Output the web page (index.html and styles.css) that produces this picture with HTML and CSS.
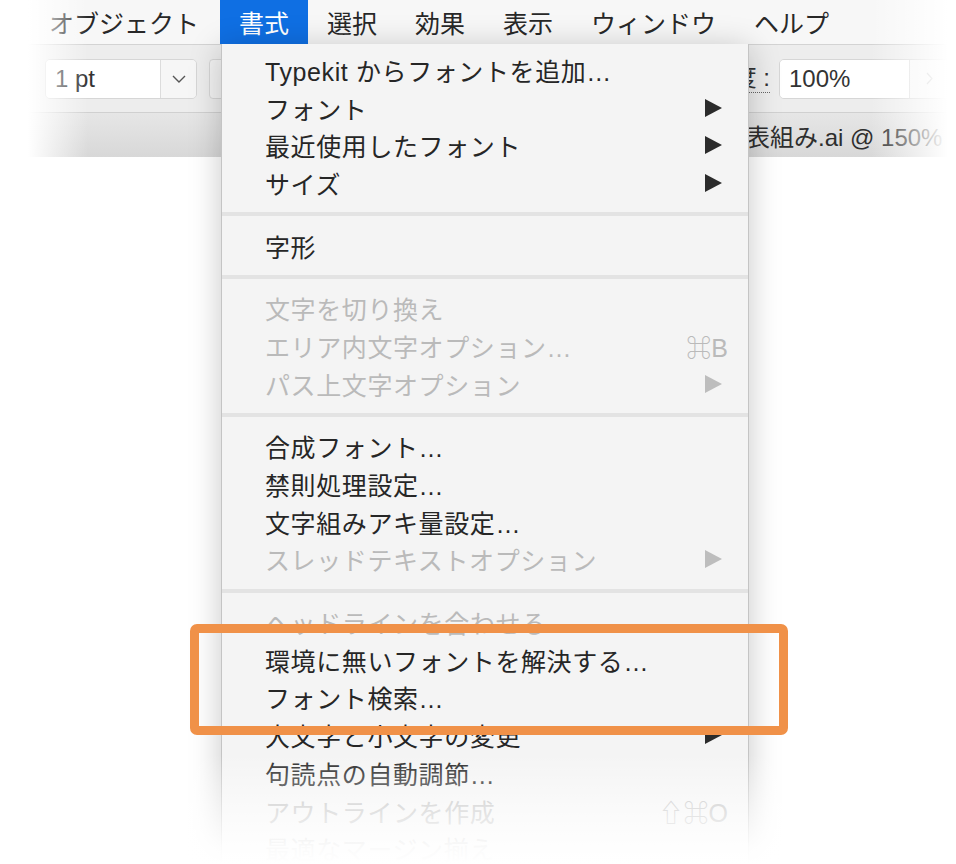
FILE: index.html
```html
<!DOCTYPE html>
<html lang="ja">
<head>
    <meta charset="UTF-8">
    <meta name="viewport" content="width=device-width, initial-scale=1.0">
    <title>書式メニュー</title>
    <link rel="stylesheet" href="styles.css">
</head>
<body>
    <div class="screen">
        <div class="menubar">
            <span class="menu-title">オブジェクト</span>
            <span class="menu-title active">書式</span>
            <span class="menu-title">選択</span>
            <span class="menu-title">効果</span>
            <span class="menu-title">表示</span>
            <span class="menu-title">ウィンドウ</span>
            <span class="menu-title">ヘルプ</span>
        </div>

        <div class="toolbar">
            <div class="combo">
                <span class="combo-value">1 pt</span>
                <span class="combo-drop">
                    <svg width="14" height="8" viewBox="0 0 14 8" fill="none" stroke="#555" stroke-width="1.4">
                        <polyline points="1 1 7 7 13 1"></polyline>
                    </svg>
                </span>
            </div>
            <div class="swatch-box"><span class="swatch-dot"></span></div>

            <div class="right-tools">
                <span class="opacity-label">不透明度 :</span>
                <div class="combo combo-wide">
                    <span class="combo-value">100%</span>
                    <span class="combo-next">
                        <svg width="7" height="13" viewBox="0 0 7 13" fill="none" stroke="#bbb" stroke-width="1.2">
                            <polyline points="1 1 6 6.5 1 12"></polyline>
                        </svg>
                    </span>
                </div>
            </div>
        </div>

        <div class="tabbar">
            <span class="doc-title">表組み.ai @ 150%</span>
        </div>

        <div class="fade-left"></div>
        <div class="fade-right"></div>

        <div class="dropdown">
            <div class="item"><span>Typekit からフォントを追加…</span></div>
            <div class="item"><span>フォント</span><span class="arrow"></span></div>
            <div class="item"><span>最近使用したフォント</span><span class="arrow"></span></div>
            <div class="item"><span>サイズ</span><span class="arrow"></span></div>
            <div class="separator"></div>
            <div class="item"><span>字形</span></div>
            <div class="separator"></div>
            <div class="item disabled"><span>文字を切り換え</span></div>
            <div class="item disabled"><span>エリア内文字オプション…</span><span class="shortcut">⌘B</span></div>
            <div class="item disabled"><span>パス上文字オプション</span><span class="arrow"></span></div>
            <div class="separator"></div>
            <div class="item"><span>合成フォント…</span></div>
            <div class="item"><span>禁則処理設定…</span></div>
            <div class="item"><span>文字組みアキ量設定…</span></div>
            <div class="item disabled"><span>スレッドテキストオプション</span><span class="arrow"></span></div>
            <div class="separator"></div>
            <div class="item disabled"><span>ヘッドラインを合わせる</span></div>
            <div class="item"><span>環境に無いフォントを解決する…</span></div>
            <div class="item"><span>フォント検索…</span></div>
            <div class="item"><span>大文字と小文字の変更</span><span class="arrow"></span></div>
            <div class="item"><span>句読点の自動調節…</span></div>
            <div class="item disabled"><span>アウトラインを作成</span><span class="shortcut">⇧⌘O</span></div>
            <div class="item disabled"><span>最適なマージン揃え</span></div>
        </div>

        <div class="highlight-box"></div>
        <div class="fade-bottom"></div>
    </div>
</body>
</html>
```

FILE: styles.css
```css
* {
    margin: 0;
    padding: 0;
    box-sizing: border-box;
    font-family: 'Liberation Sans', 'Noto Sans CJK JP', sans-serif;
}

body {
    background: #ffffff;
    color: #262626;
    overflow: hidden;
    width: 956px;
    height: 864px;
}

.screen {
    position: relative;
    width: 956px;
    height: 864px;
    overflow: hidden;
    background: #ffffff;
}

/* top menu bar */
.menubar {
    display: flex;
    height: 45px;
    padding-left: 30px;
    background: #f7f7f7;
    border-bottom: 1px solid #d3d3d3;
}

.menu-title {
    display: flex;
    align-items: center;
    height: 44px;
    padding: 0 19px;
    font-size: 25px;
    color: #282828;
}

.menu-title.active {
    margin-left: 2px;
    background: #0f6fe3;
    color: #ffffff;
}

/* tool options bar */
.toolbar {
    display: flex;
    align-items: center;
    height: 68px;
    padding: 0 6px 0 45px;
    background: #ededed;
    border-bottom: 1px solid #d0d0d0;
}

.combo {
    display: flex;
    height: 40px;
    border: 1px solid #d6d6d6;
    border-radius: 5px;
    overflow: hidden;
}

.combo-value {
    display: flex;
    align-items: center;
    width: 114px;
    padding-left: 9px;
    background: #ffffff;
    font-size: 24px;
    color: #333333;
}

.combo-drop {
    display: flex;
    align-items: center;
    justify-content: center;
    width: 36px;
    background: #f6f6f6;
    border-left: 1px solid #dcdcdc;
}

.swatch-box {
    display: flex;
    align-items: center;
    width: 60px;
    height: 40px;
    margin-left: 12px;
    padding-left: 11px;
    background: #f3f3f3;
    border: 1px solid #d6d6d6;
    border-radius: 4px;
}

.swatch-dot {
    width: 5px;
    height: 5px;
    background: #000000;
}

.right-tools {
    display: flex;
    align-items: center;
    gap: 9px;
    margin-left: auto;
}

.opacity-label {
    font-size: 24px;
    color: #333333;
    border-bottom: 1px dotted #666;
    line-height: 28px;
}

.combo-wide .combo-value {
    width: 129px;
}

.combo-next {
    display: flex;
    align-items: center;
    justify-content: center;
    width: 40px;
    background: #f6f6f6;
    border-left: 1px solid #dcdcdc;
}

/* document tab */
.tabbar {
    display: flex;
    align-items: center;
    height: 44px;
    padding-left: 746px;
    background: linear-gradient(#e6e6e6, #d8d8d8);
    white-space: nowrap;
}

.doc-title {
    font-size: 24px;
    color: #2e2e2e;
}

.fade-left {
    position: absolute;
    top: 0;
    left: 0;
    width: 100px;
    height: 160px;
    background: linear-gradient(to right, #fff 0, #fff 28px, rgba(255, 255, 255, 0) 88px);
}

.fade-right {
    position: absolute;
    top: 0;
    right: 0;
    width: 90px;
    height: 160px;
    background: linear-gradient(to left, #fff 0, #fff 8px, rgba(255, 255, 255, 0) 85px);
}

/* format dropdown */
.dropdown {
    position: absolute;
    top: 44px;
    left: 221px;
    width: 528px;
    height: 860px;
    padding: 7px 0 0;
    background: #f4f4f4;
    border-left: 1px solid #c4c4c4;
    border-right: 1px solid #c4c4c4;
    box-shadow: 0 4px 30px rgba(0, 0, 0, 0.22);
}

.item {
    display: flex;
    align-items: center;
    justify-content: space-between;
    height: 37.7px;
    padding: 0 20px 0 43px;
    font-size: 25px;
    letter-spacing: 0.6px;
    color: #262626;
    white-space: nowrap;
}

.item.disabled {
    color: #bababa;
}

.arrow {
    width: 0;
    height: 0;
    margin-right: 6px;
    border-left: 17px solid #2b2b2b;
    border-top: 9px solid transparent;
    border-bottom: 9px solid transparent;
}

.item.disabled .arrow {
    border-left-color: #bdbdbd;
}

.shortcut {
    font-size: 25px;
    letter-spacing: 0;
}

.separator {
    height: 4px;
    margin: 10.5px 0;
    background: #e3e3e3;
}

.highlight-box {
    position: absolute;
    top: 624px;
    left: 190px;
    width: 598px;
    height: 111px;
    border: 9px solid #f09148;
    border-radius: 7px;
}

.fade-bottom {
    position: absolute;
    left: 0;
    right: 0;
    bottom: 0;
    height: 110px;
    background: linear-gradient(rgba(255, 255, 255, 0) 0, rgba(255, 255, 255, 0.5) 45%, rgba(255, 255, 255, 0.93) 85%, #fff 100%);
}
```
